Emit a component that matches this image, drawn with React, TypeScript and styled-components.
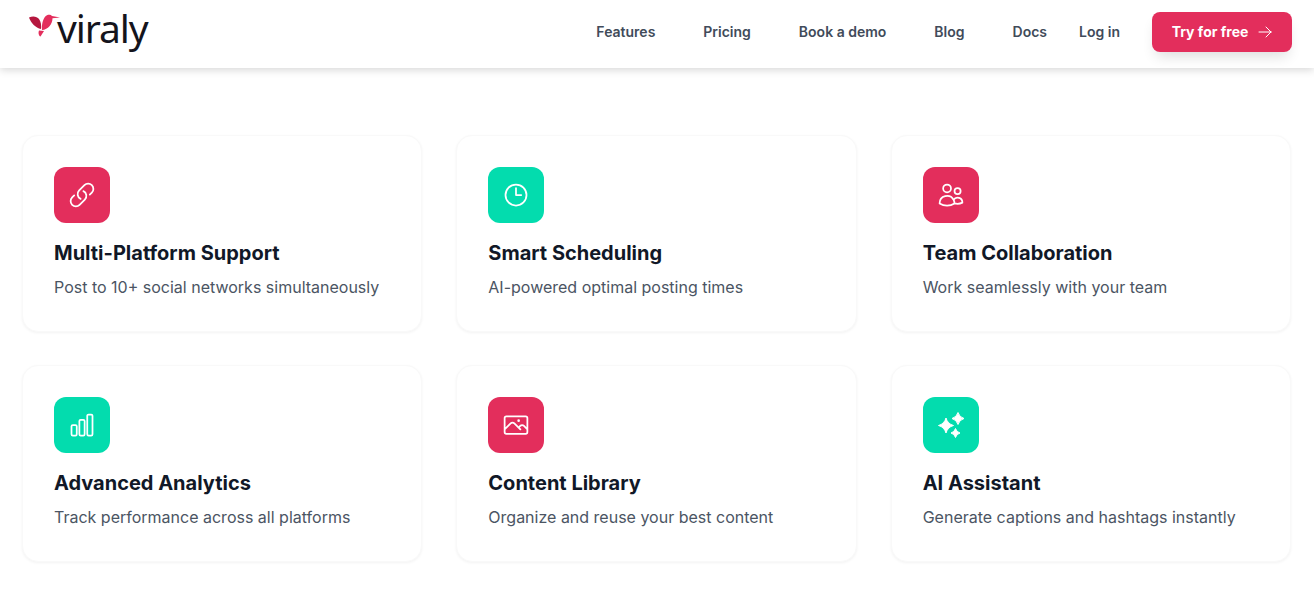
import React from "react";
import styled, { createGlobalStyle } from "styled-components";
import {
  HiOutlineLink,
  HiOutlineClock,
  HiOutlineUsers,
  HiOutlineChartBar,
  HiOutlinePhoto,
  HiOutlineArrowRight,
} from "react-icons/hi2";

const Global = createGlobalStyle`
  html, body { margin: 0; padding: 0; background: #fff; }
  body { font-family: Inter, "Liberation Sans", sans-serif; overflow: hidden; }
  * { box-sizing: border-box; }
`;

const Page = styled.div`
  width: 1314px;
  height: 614px;
  background: #fff;
  overflow: hidden;
`;

const Header = styled.header`
  height: 68px;
  padding: 0 22px 0 29px;
  display: flex;
  align-items: flex-start;
  justify-content: space-between;
  background: #fff;
  box-shadow: 0 2px 8px rgba(0, 0, 0, 0.16);
`;

const Logo = styled.div`
  display: flex;
  align-items: flex-start;
  height: 68px;
  padding-top: 14px;
`;

const LogoText = styled.span`
  font-family: "Noto Sans", sans-serif;
  font-size: 39px;
  font-weight: 400;
  line-height: 36px;
  letter-spacing: -1.1px;
  color: #14141c;
  margin-left: -4px;
  margin-top: -4px;
`;

const Nav = styled.nav`
  display: flex;
  align-items: center;
  height: 64px;
`;

const NavLink = styled.a<{ $gap: number }>`
  font-size: 14px;
  font-weight: 600;
  line-height: 20px;
  color: #414b5a;
  margin-right: ${(p) => p.$gap}px;
`;

const CTA = styled.button`
  width: 140px;
  height: 40px;
  border: 0;
  border-radius: 8px;
  padding: 0 0 0 1px;
  background: #e32e5c;
  color: #fff;
  display: flex;
  align-items: center;
  justify-content: center;
  gap: 9px;
  font: 700 14px/20px Inter, sans-serif;
  box-shadow: 0 8px 14px -4px rgba(0, 0, 0, 0.14);
  svg {
    width: 16px;
    height: 16px;
  }
`;

const Grid = styled.main`
  display: grid;
  grid-template-columns: repeat(3, 1fr);
  grid-auto-rows: 197px;
  gap: 33px 34px;
  padding: 67px 23px 0 22px;
`;

const Card = styled.article`
  padding: 32px;
  border-radius: 16px;
  background: #fff;
  border: 1px solid #f9f9f9;
  box-shadow: 0 1px 3px rgba(0, 0, 0, 0.05);
`;

const IconBox = styled.div<{ $tone: "rose" | "mint" }>`
  width: 56px;
  height: 56px;
  margin: -1px 0 0 -1px;
  border-radius: 12px;
  background: ${(p) => (p.$tone === "rose" ? "#e32e5c" : "#03dcae")};
  color: #fff;
  display: flex;
  align-items: center;
  justify-content: center;
  svg {
    width: 28px;
    height: 28px;
  }
`;

const Title = styled.h3`
  margin: 16px 0 0 -1px;
  font-size: 20px;
  font-weight: 700;
  line-height: 28px;
  color: #111827;
`;

const Desc = styled.p`
  margin: 8px 0 0 -1px;
  font-size: 16px;
  font-weight: 400;
  line-height: 24px;
  color: #4b5563;
`;

const star = (cx: number, cy: number, r: number) => {
  const k = r * 0.22;
  return `M${cx} ${cy - r} Q${cx + k} ${cy - k} ${cx + r} ${cy} Q${cx + k} ${cy + k} ${cx} ${cy + r} Q${cx - k} ${cy + k} ${cx - r} ${cy} Q${cx - k} ${cy - k} ${cx} ${cy - r}Z`;
};

const Sparkles = () => (
  <svg viewBox="0 0 28 28" fill="#fff" stroke="#fff" strokeWidth="1" strokeLinejoin="round" aria-hidden="true">
    <path d={star(9, 14.5, 7.5)} />
    <path d={star(21, 7.5, 6)} />
    <path d={star(18.5, 22, 4.5)} />
  </svg>
);

const features = [
  { t: "Multi-Platform Support", d: "Post to 10+ social networks simultaneously", I: HiOutlineLink, tone: "rose" },
  { t: "Smart Scheduling", d: "AI-powered optimal posting times", I: HiOutlineClock, tone: "mint" },
  { t: "Team Collaboration", d: "Work seamlessly with your team", I: HiOutlineUsers, tone: "rose" },
  { t: "Advanced Analytics", d: "Track performance across all platforms", I: HiOutlineChartBar, tone: "mint" },
  { t: "Content Library", d: "Organize and reuse your best content", I: HiOutlinePhoto, tone: "rose" },
  { t: "AI Assistant", d: "Generate captions and hashtags instantly", I: Sparkles, tone: "mint" },
] as const;

const links: [string, number][] = [
  ["Features", 48],
  ["Pricing", 48],
  ["Book a demo", 48],
  ["Blog", 48],
  ["Docs", 32],
  ["Log in", 32],
];

const Bird = () => (
  <svg width="32" height="24" viewBox="0 0 32 24" aria-hidden="true">
    <path d="M0 3.5 C4 1.5 8 2.5 10 5 C12 8 12.5 11 12 15 C6.5 14 2 9 0 3.5Z" fill="#b5173f" />
    <path d="M13 16 C12.5 9 14.5 3 18 1.2 C20 0.2 22 0.8 23 2 L31 3.5 L23.5 4.2 C23.5 10 19 15.5 13 16Z" fill="#e32e5c" />
    <path d="M10 16.5 L15 17 L11.5 22.5 C9.8 22 9 19 10 16.5Z" fill="#e32e5c" />
  </svg>
);

export default function App() {
  return (
    <Page>
      <Global />
      <Header>
        <Logo>
          <Bird />
          <LogoText>viraly</LogoText>
        </Logo>
        <Nav>
          {links.map(([l, g]) => (
            <NavLink key={l} $gap={g}>
              {l}
            </NavLink>
          ))}
          <CTA>
            Try for free
            <HiOutlineArrowRight />
          </CTA>
        </Nav>
      </Header>
      <Grid>
        {features.map(({ t, d, I, tone }) => (
          <Card key={t}>
            <IconBox $tone={tone}>
              <I />
            </IconBox>
            <Title>{t}</Title>
            <Desc>{d}</Desc>
          </Card>
        ))}
      </Grid>
    </Page>
  );
}
